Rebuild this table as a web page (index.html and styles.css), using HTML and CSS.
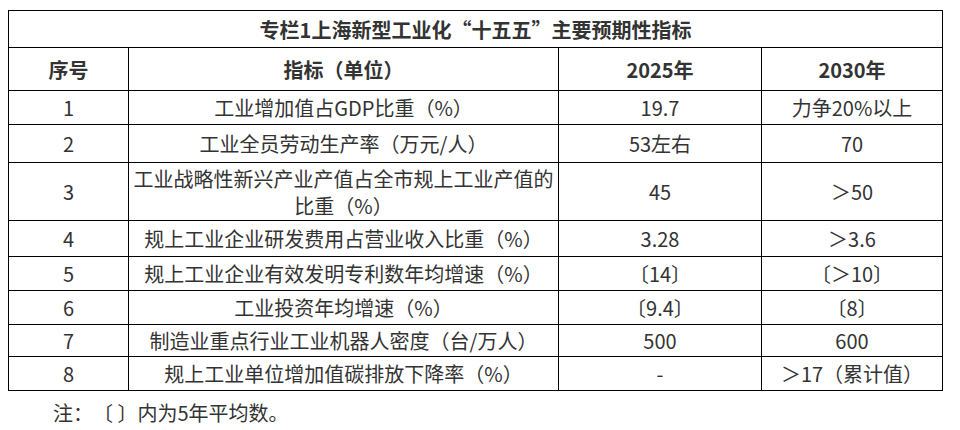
FILE: index.html
```html
<!DOCTYPE html>
<html lang="zh-CN">
<head>
<meta charset="utf-8">
<link rel="stylesheet" href="styles.css">
</head>
<body>
<div class="page">
  <table class="ind">
    <colgroup>
      <col class="c1"><col class="c2"><col class="c3"><col class="c4">
    </colgroup>
    <tr class="h-title"><th colspan="4">专栏1上海新型工业化“十五五”主要预期性指标</th></tr>
    <tr class="h-head"><th>序号</th><th>指标（单位）</th><th>2025年</th><th>2030年</th></tr>
    <tr class="h34"><td>1</td><td>工业增加值占GDP比重（%）</td><td>19.7</td><td>力争20%以上</td></tr>
    <tr class="h38"><td>2</td><td>工业全员劳动生产率（万元/人）</td><td>53左右</td><td>70</td></tr>
    <tr class="h58"><td>3</td><td>工业战略性新兴产业产值占全市规上工业产值的比重（%）</td><td>45</td><td>＞50</td></tr>
    <tr class="h36"><td>4</td><td>规上工业企业研发费用占营业收入比重（%）</td><td>3.28</td><td>＞3.6</td></tr>
    <tr class="h34"><td>5</td><td>规上工业企业有效发明专利数年均增速（%）</td><td>〔14〕</td><td>〔＞10〕</td></tr>
    <tr class="h34"><td>6</td><td>工业投资年均增速（%）</td><td>〔9.4〕</td><td>〔8〕</td></tr>
    <tr class="h32"><td>7</td><td>制造业重点行业工业机器人密度（台/万人）</td><td>500</td><td>600</td></tr>
    <tr class="h34"><td>8</td><td>规上工业单位增加值碳排放下降率（%）</td><td>-</td><td>＞17（累计值）</td></tr>
  </table>
  <p class="note">注：〔 〕内为5年平均数。</p>
</div>
</body>
</html>
```
FILE: styles.css
```css
html, body {
  margin: 0;
  padding: 0;
  background: #fff;
}
body {
  font-family: "Noto Sans CJK SC", "Noto Sans", sans-serif;
  color: #333;
  font-size: 20px;
}
.page {
  padding: 10px 0 0 8px;
}
.ind {
  border-collapse: collapse;
  table-layout: fixed;
  width: 934px;
}
.c1 { width: 120px; }
.c2 { width: 430px; }
.c3 { width: 203px; }
.c4 { width: 181px; }
.ind th, .ind td {
  border: 1px solid #000;
  text-align: center;
  vertical-align: middle;
  padding: 0 4px;
  line-height: 27px;
}
.ind th { font-weight: bold; }
.h-title th { height: 36px; }
.h-head th { height: 42px; }
.h32 td { height: 31px; }
.h34 td { height: 33px; }
.h36 td { height: 35px; }
.h38 td { height: 37px; }
.h58 td { height: 57px; }
.note {
  margin: 8px 0 0 45px;
  line-height: 27px;
  text-spacing-trim: space-all;
}
```
